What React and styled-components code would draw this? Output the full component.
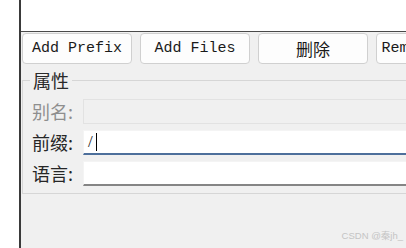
import React from 'react'
import styled, { createGlobalStyle } from 'styled-components'

const GlobalStyle = createGlobalStyle`
  html, body {
    margin: 0;
    padding: 0;
    background: #ffffff;
    overflow: hidden;
  }
`

const Page = styled.div`
  width: 406px;
  height: 248px;
  display: flex;
  background: #ffffff;
  position: relative;
  overflow: hidden;
  font-family: "Noto Sans CJK SC", sans-serif;
`

const Gutter = styled.div`
  width: 19px;
  flex-shrink: 0;
  background: #ffffff;
`

const Main = styled.div`
  flex: 1;
  display: flex;
  flex-direction: column;
  border-left: 2px solid #3a3a3a;
  overflow: hidden;
`

const ListArea = styled.div`
  height: 31px;
  flex-shrink: 0;
  background: #ffffff;
  border-bottom: 1px solid #4a4a4a;
`

const Panel = styled.div`
  flex: 1;
  background: #f0f0f0;
  padding: 1px 0 0 1px;
`

const Toolbar = styled.div`
  display: flex;
  gap: 8px;
  width: 600px;
`

const Button = styled.button`
  width: 110px;
  height: 31px;
  flex-shrink: 0;
  padding: 0;
  display: flex;
  align-items: center;
  justify-content: center;
  white-space: nowrap;
  overflow: visible;
  background: #fdfdfd;
  border: 1px solid #d0d0d0;
  border-radius: 4px;
  color: #1a1a1a;
  font-family: ${(p) => (p.$cjk ? '"Noto Sans CJK SC", sans-serif' : '"Liberation Mono", monospace')};
  font-size: ${(p) => (p.$cjk ? '17px' : '15px')};
`

const GroupBox = styled.fieldset`
  margin: 5px 0 0 0;
  width: 500px;
  border: 1px solid #d6d6d6;
  border-right: none;
  padding: 8px 0 7px 9px;
`

const Legend = styled.legend`
  margin-left: -2px;
  padding: 0 3px;
  font-size: 18px;
  line-height: 22px;
  color: #2a2a2a;
`

const Rows = styled.div`
  display: flex;
  flex-direction: column;
  gap: 6px;
`

const Row = styled.div`
  display: grid;
  grid-template-columns: 51px 1fr;
  align-items: center;
  height: 25px;
`

const Label = styled.span`
  font-size: 18px;
  line-height: 25px;
  white-space: nowrap;
  color: ${(p) => (p.$disabled ? '#8e8e8e' : '#262626')};
`

const Field = styled.div`
  height: 25px;
  box-sizing: border-box;
  display: flex;
  align-items: center;
  padding-left: 4px;
  font-family: "Liberation Serif", serif;
  font-size: 17px;
  color: #1a1a1a;
  background: ${(p) => (p.$disabled ? '#f0f0f0' : '#ffffff')};
  border: 1px solid ${(p) => (p.$disabled ? '#e2e2e2' : '#f4f4f4')};
  border-bottom: ${(p) =>
    p.$focused ? '2px solid #4d6f9b' : p.$disabled ? '1px solid #e2e2e2' : '2px solid #858585'};
  border-right: none;
`

const Caret = styled.span`
  width: 1px;
  height: 18px;
  margin-left: 3px;
  background: #000000;
`

const Watermark = styled.div`
  position: absolute;
  right: 3px;
  bottom: 6px;
  font-size: 9.5px;
  color: #c4c4c4;
  font-family: "Liberation Sans", "Noto Sans CJK SC", sans-serif;
`

const buttons = [
  { text: 'Add Prefix' },
  { text: 'Add Files' },
  { text: '删除', cjk: true },
  { text: 'Remove File' },
]

const App = () => (
  <Page>
    <GlobalStyle />
    <Gutter />
    <Main>
      <ListArea />
      <Panel>
        <Toolbar>
          {buttons.map((b) => (
            <Button key={b.text} $cjk={b.cjk}>
              {b.text}
            </Button>
          ))}
        </Toolbar>
        <GroupBox>
          <Legend>属性</Legend>
          <Rows>
            <Row>
              <Label $disabled>别名:</Label>
              <Field $disabled />
            </Row>
            <Row>
              <Label>前缀:</Label>
              <Field $focused>
                /<Caret />
              </Field>
            </Row>
            <Row>
              <Label>语言:</Label>
              <Field />
            </Row>
          </Rows>
        </GroupBox>
      </Panel>
    </Main>
    <Watermark>CSDN @秦jh_</Watermark>
  </Page>
)

export default App
